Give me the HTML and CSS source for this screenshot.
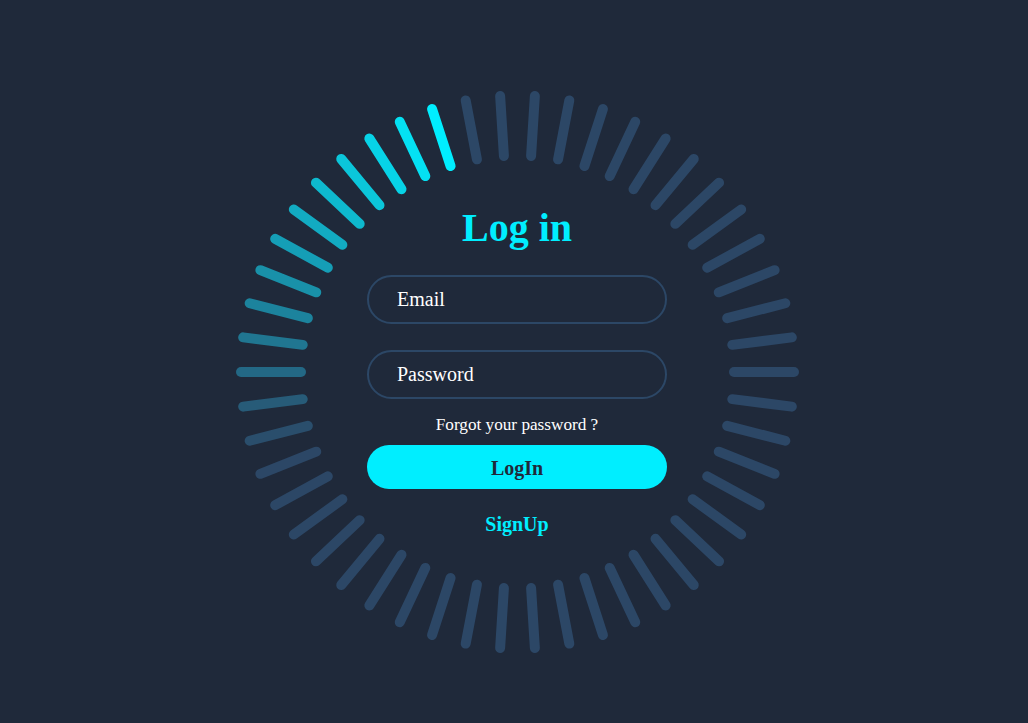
FILE: index.html
```html
<!DOCTYPE html>
<html lang="en">
<head>
<meta charset="utf-8">
<title>Log in</title>
<link rel="stylesheet" href="styles.css">
</head>
<body>
<main class="page">
  <div class="stage">
    <div class="ring" aria-hidden="true">
      <span class="bar" style="--i:0"></span><span class="bar" style="--i:1"></span><span class="bar" style="--i:2"></span><span class="bar" style="--i:3"></span><span class="bar" style="--i:4"></span>
      <span class="bar" style="--i:5"></span><span class="bar" style="--i:6"></span><span class="bar" style="--i:7"></span><span class="bar" style="--i:8"></span><span class="bar" style="--i:9"></span>
      <span class="bar" style="--i:10"></span><span class="bar" style="--i:11"></span><span class="bar" style="--i:12"></span><span class="bar" style="--i:13"></span><span class="bar" style="--i:14"></span>
      <span class="bar" style="--i:15"></span><span class="bar" style="--i:16"></span><span class="bar" style="--i:17"></span><span class="bar" style="--i:18"></span><span class="bar" style="--i:19"></span>
      <span class="bar" style="--i:20"></span><span class="bar" style="--i:21"></span><span class="bar" style="--i:22"></span><span class="bar" style="--i:23"></span><span class="bar" style="--i:24"></span>
      <span class="bar" style="--i:25"></span><span class="bar" style="--i:26"></span><span class="bar" style="--i:27"></span><span class="bar" style="--i:28"></span><span class="bar" style="--i:29"></span>
      <span class="bar" style="--i:30"></span><span class="bar" style="--i:31"></span><span class="bar" style="--i:32"></span><span class="bar" style="--i:33"></span><span class="bar" style="--i:34"></span>
      <span class="bar" style="--i:35"></span><span class="bar" style="--i:36"></span><span class="bar" style="--i:37"></span><span class="bar" style="--i:38"></span><span class="bar" style="--i:39"></span>
      <span class="bar" style="--i:40"></span><span class="bar" style="--i:41"></span><span class="bar" style="--i:42"></span><span class="bar" style="--i:43"></span><span class="bar" style="--i:44"></span>
      <span class="bar" style="--i:45"></span><span class="bar" style="--i:46"></span><span class="bar" style="--i:47"></span><span class="bar" style="--i:48"></span><span class="bar" style="--i:49"></span>
    </div>
    <form class="login">
      <h2 class="title">Log in</h2>
      <input class="field field-email" type="email" placeholder="Email">
      <input class="field field-pass" type="password" placeholder="Password">
      <a class="forgot" href="#">Forgot your password ?</a>
      <button class="btn" type="button">LogIn</button>
      <a class="signup" href="#">SignUp</a>
    </form>
  </div>
</main>
</body>
</html>
```
FILE: styles.css
```css
* { box-sizing: border-box; }
html, body { margin: 0; height: 100%; }
body {
  background: #1f293a;
  font-family: "Liberation Serif", "Times New Roman", serif;
  overflow: hidden;
}
.page {
  display: flex;
  justify-content: center;
  padding-top: 90px;
  padding-left: 6px;
  min-height: 100vh;
}
.stage {
  position: relative;
  width: 563px;
  height: 563px;
  display: flex;
  flex-direction: column;
  align-items: center;
  padding-top: 118px;
}
.ring {
  position: absolute;
  inset: 0;
}
.bar {
  position: absolute;
  left: 0;
  top: calc(50% - 5px);
  width: 70px;
  height: 10px;
  border-radius: 10px;
  background: #2c4766;
  transform-origin: 281.5px 5px;
  transform: rotate(calc(var(--i) * 7.2deg));
}
.bar:nth-child(11) { background: rgb(0, 238, 255); }
.bar:nth-child(10) { background: rgb(4, 225, 243); }
.bar:nth-child(9)  { background: rgb(7, 211, 231); }
.bar:nth-child(8)  { background: rgb(11, 198, 218); }
.bar:nth-child(7)  { background: rgb(14, 185, 206); }
.bar:nth-child(6)  { background: rgb(18, 171, 194); }
.bar:nth-child(5)  { background: rgb(21, 158, 182); }
.bar:nth-child(4)  { background: rgb(25, 145, 169); }
.bar:nth-child(3)  { background: rgb(28, 131, 157); }
.bar:nth-child(2)  { background: rgb(32, 118, 145); }
.bar:nth-child(1)  { background: rgb(35, 104, 133); }
.bar:nth-child(50) { background: rgb(39, 91, 120); }
.bar:nth-child(49) { background: rgb(42, 78, 108); }

.login {
  position: relative;
  width: 300px;
  display: flex;
  flex-direction: column;
  align-items: center;
}
.title {
  margin: 0;
  font-size: 40px;
  line-height: 40px;
  font-weight: 700;
  color: #0ef;
}
.field {
  display: block;
  width: 300px;
  height: 49px;
  margin: 26.5px 0 0;
  padding: 0 0 0 28px;
  background: transparent;
  border: 2px solid #2c4766;
  border-radius: 40px;
  outline: none;
  font-family: "Liberation Serif", "Times New Roman", serif;
  font-size: 20px;
  color: #fff;
}
.field::placeholder { color: #fff; opacity: 1; }
.field-pass { margin-top: 26px; }
.forgot {
  margin-top: 16px;
  font-size: 17.2px;
  line-height: 20px;
  color: #fff;
  text-decoration: none;
}
.btn {
  margin-top: 10px;
  width: 300px;
  height: 44px;
  padding: 3px 0 0;
  border: none;
  border-radius: 40px;
  background: #0ef;
  font-family: "Liberation Serif", "Times New Roman", serif;
  font-size: 20px;
  font-weight: 700;
  color: #1f293a;
  cursor: pointer;
}
.signup {
  margin-top: 23px;
  font-size: 20px;
  line-height: 24px;
  font-weight: 700;
  color: #0ef;
  text-decoration: none;
}
```
